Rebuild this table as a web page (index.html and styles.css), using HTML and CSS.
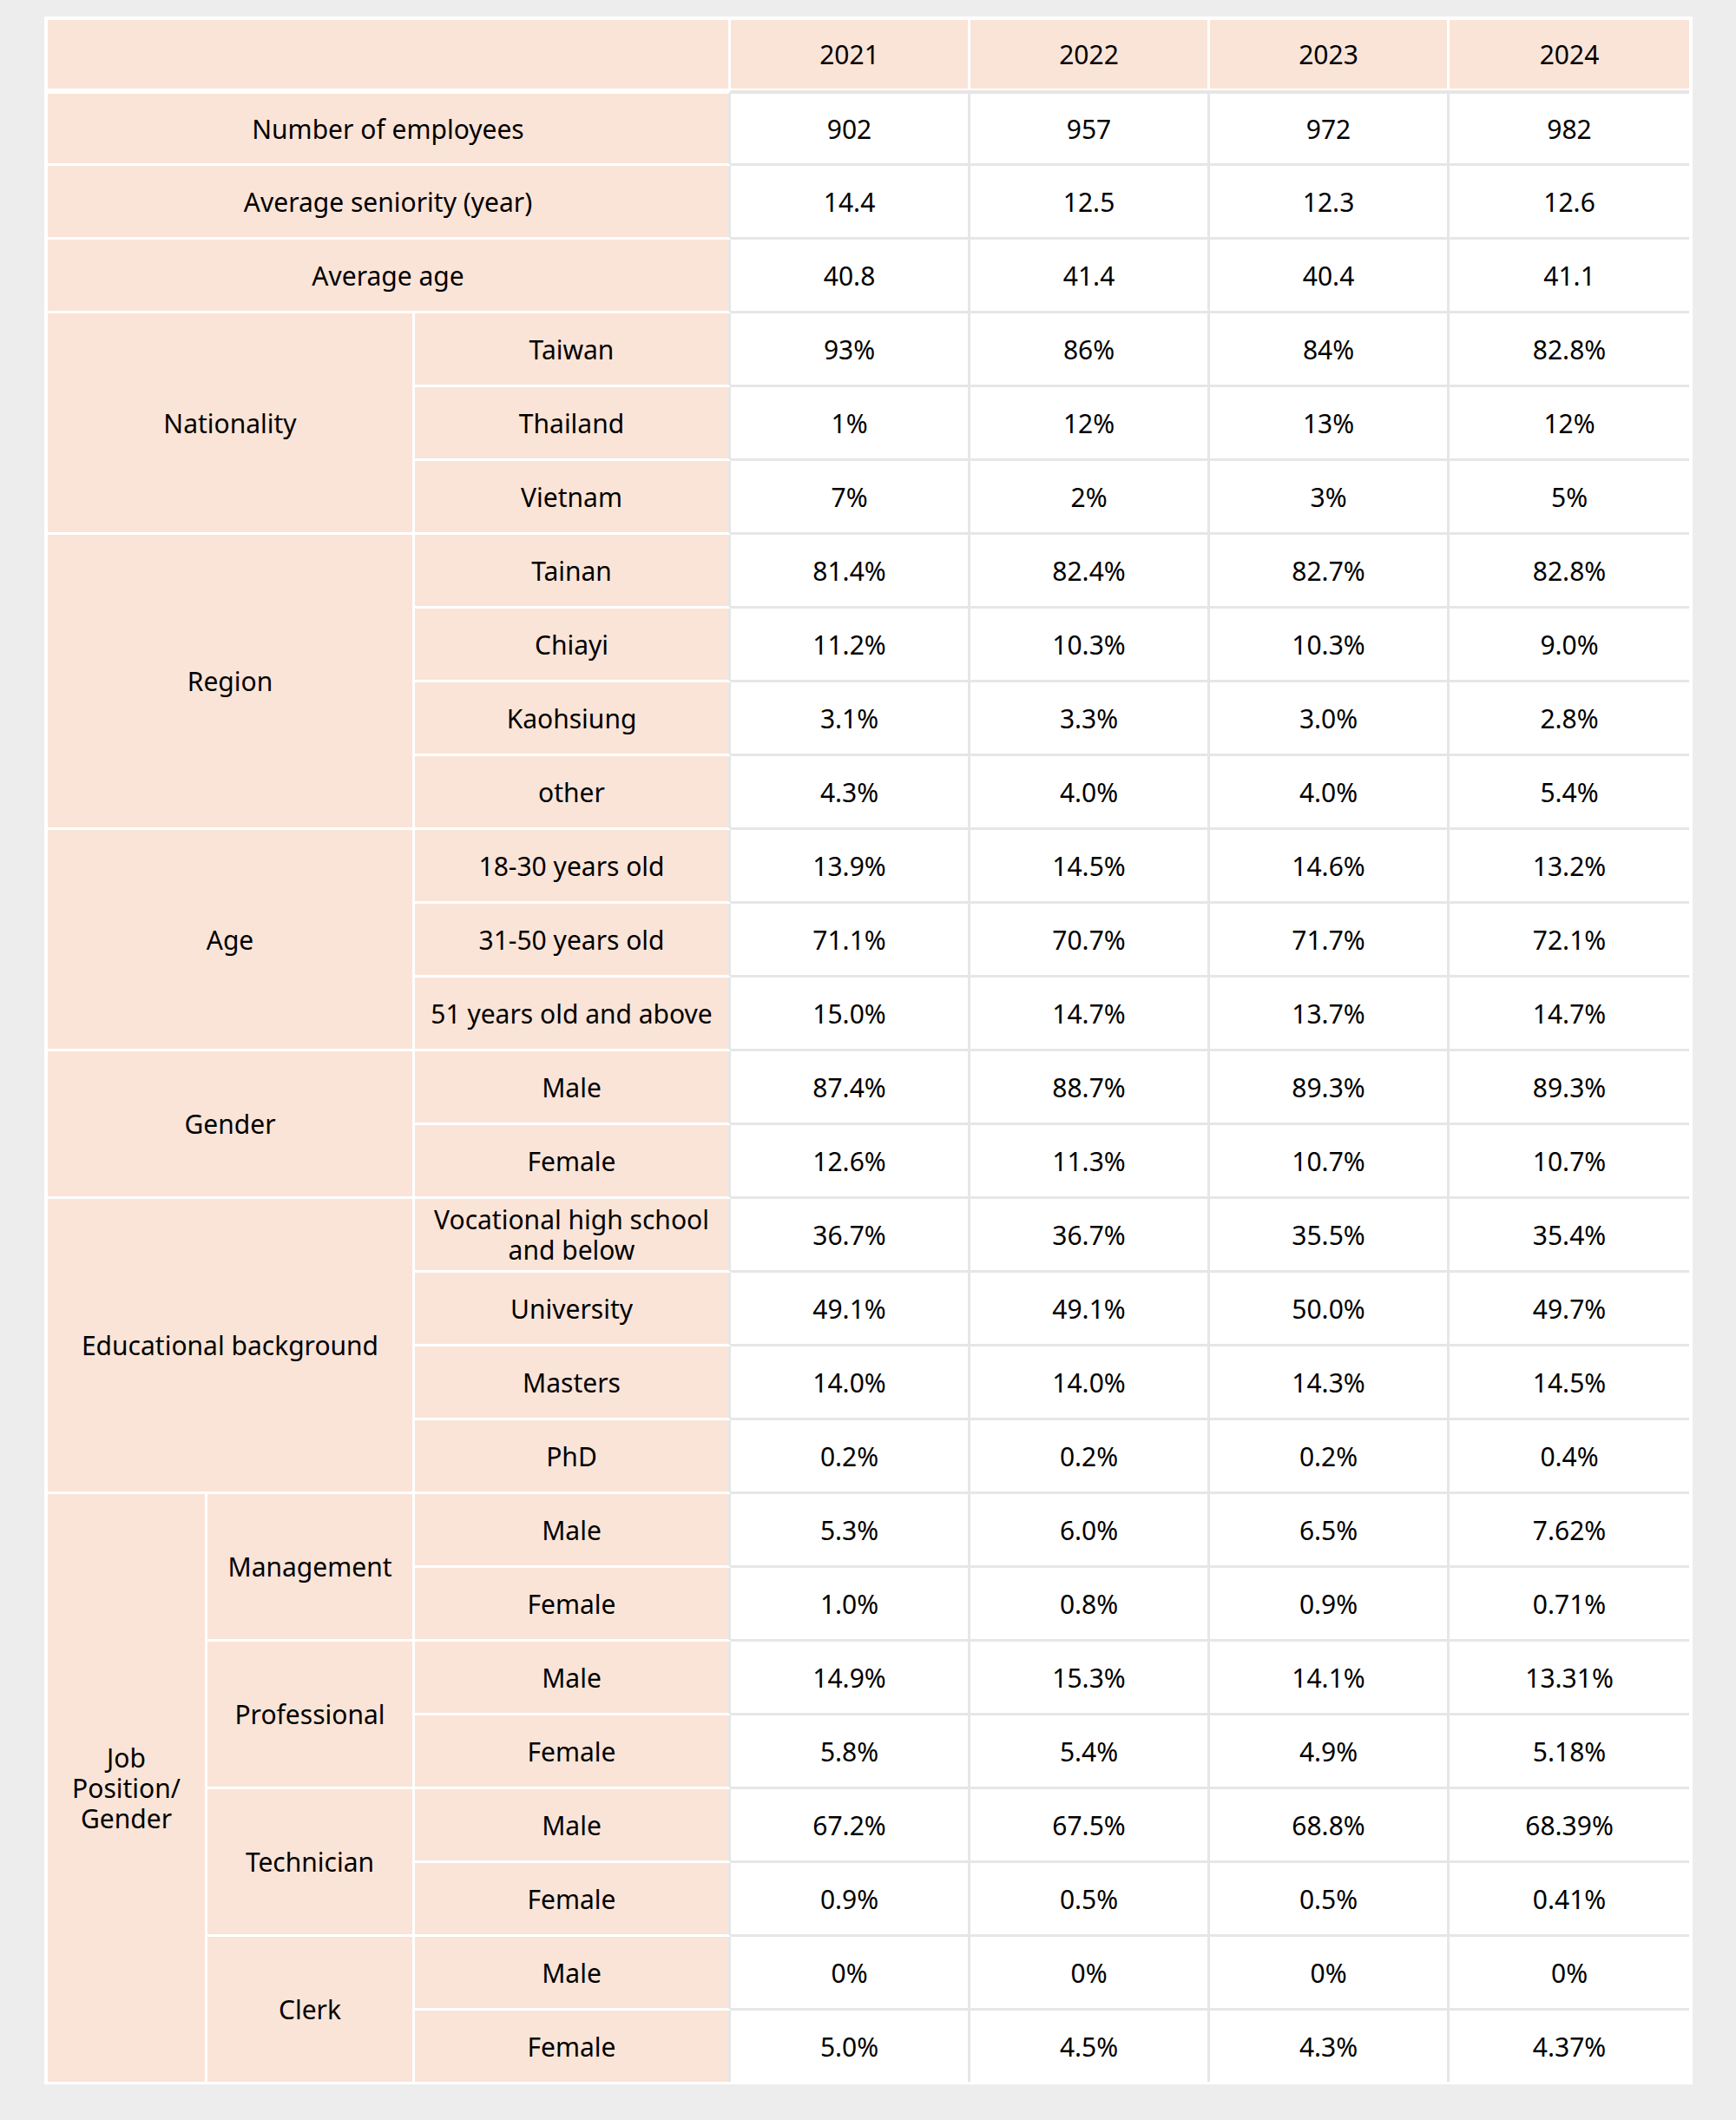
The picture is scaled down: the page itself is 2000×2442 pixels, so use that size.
FILE: index.html
```html
<!DOCTYPE html>
<html lang="en">
<head>
<meta charset="utf-8">
<title>Employee structure</title>
<link rel="stylesheet" href="styles.css">
</head>
<body>
<div class="card">
<table class="stats">
<colgroup>
<col class="w1"><col class="w2"><col class="w3"><col class="wy"><col class="wy"><col class="wy"><col class="wy">
</colgroup>
<thead>
<tr class="head">
<th class="lab" colspan="3"></th><th class="yr">2021</th><th class="yr">2022</th><th class="yr">2023</th><th class="yr end">2024</th>
</tr>
</thead>
<tbody>
<tr class="first"><th class="lab edge" colspan="3">Number of employees</th><td>902</td><td>957</td><td>972</td><td class="end">982</td></tr>
<tr><th class="lab edge" colspan="3">Average seniority (year)</th><td>14.4</td><td>12.5</td><td>12.3</td><td class="end">12.6</td></tr>
<tr><th class="lab edge" colspan="3">Average age</th><td>40.8</td><td>41.4</td><td>40.4</td><td class="end">41.1</td></tr>

<tr><th class="lab" colspan="2" rowspan="3">Nationality</th><th class="lab edge">Taiwan</th><td>93%</td><td>86%</td><td>84%</td><td class="end">82.8%</td></tr>
<tr><th class="lab edge">Thailand</th><td>1%</td><td>12%</td><td>13%</td><td class="end">12%</td></tr>
<tr><th class="lab edge">Vietnam</th><td>7%</td><td>2%</td><td>3%</td><td class="end">5%</td></tr>

<tr><th class="lab" colspan="2" rowspan="4">Region</th><th class="lab edge">Tainan</th><td>81.4%</td><td>82.4%</td><td>82.7%</td><td class="end">82.8%</td></tr>
<tr><th class="lab edge">Chiayi</th><td>11.2%</td><td>10.3%</td><td>10.3%</td><td class="end">9.0%</td></tr>
<tr><th class="lab edge">Kaohsiung</th><td>3.1%</td><td>3.3%</td><td>3.0%</td><td class="end">2.8%</td></tr>
<tr><th class="lab edge">other</th><td>4.3%</td><td>4.0%</td><td>4.0%</td><td class="end">5.4%</td></tr>

<tr><th class="lab" colspan="2" rowspan="3">Age</th><th class="lab edge">18-30 years old</th><td>13.9%</td><td>14.5%</td><td>14.6%</td><td class="end">13.2%</td></tr>
<tr><th class="lab edge">31-50 years old</th><td>71.1%</td><td>70.7%</td><td>71.7%</td><td class="end">72.1%</td></tr>
<tr><th class="lab edge">51 years old and above</th><td>15.0%</td><td>14.7%</td><td>13.7%</td><td class="end">14.7%</td></tr>

<tr><th class="lab" colspan="2" rowspan="2">Gender</th><th class="lab edge">Male</th><td>87.4%</td><td>88.7%</td><td>89.3%</td><td class="end">89.3%</td></tr>
<tr><th class="lab edge">Female</th><td>12.6%</td><td>11.3%</td><td>10.7%</td><td class="end">10.7%</td></tr>

<tr><th class="lab" colspan="2" rowspan="4">Educational background</th><th class="lab edge">Vocational high school and below</th><td>36.7%</td><td>36.7%</td><td>35.5%</td><td class="end">35.4%</td></tr>
<tr><th class="lab edge">University</th><td>49.1%</td><td>49.1%</td><td>50.0%</td><td class="end">49.7%</td></tr>
<tr><th class="lab edge">Masters</th><td>14.0%</td><td>14.0%</td><td>14.3%</td><td class="end">14.5%</td></tr>
<tr><th class="lab edge">PhD</th><td>0.2%</td><td>0.2%</td><td>0.2%</td><td class="end">0.4%</td></tr>

<tr><th class="lab bottom" rowspan="8">Job Position/ Gender</th><th class="lab" rowspan="2">Management</th><th class="lab edge">Male</th><td>5.3%</td><td>6.0%</td><td>6.5%</td><td class="end">7.62%</td></tr>
<tr><th class="lab edge">Female</th><td>1.0%</td><td>0.8%</td><td>0.9%</td><td class="end">0.71%</td></tr>
<tr><th class="lab" rowspan="2">Professional</th><th class="lab edge">Male</th><td>14.9%</td><td>15.3%</td><td>14.1%</td><td class="end">13.31%</td></tr>
<tr><th class="lab edge">Female</th><td>5.8%</td><td>5.4%</td><td>4.9%</td><td class="end">5.18%</td></tr>
<tr><th class="lab" rowspan="2">Technician</th><th class="lab edge">Male</th><td>67.2%</td><td>67.5%</td><td>68.8%</td><td class="end">68.39%</td></tr>
<tr><th class="lab edge">Female</th><td>0.9%</td><td>0.5%</td><td>0.5%</td><td class="end">0.41%</td></tr>
<tr><th class="lab bottom" rowspan="2">Clerk</th><th class="lab edge">Male</th><td>0%</td><td>0%</td><td>0%</td><td class="end">0%</td></tr>
<tr class="last"><th class="lab edge bottom">Female</th><td class="bottom">5.0%</td><td class="bottom">4.5%</td><td class="bottom">4.3%</td><td class="end bottom">4.37%</td></tr>
</tbody>
</table>
</div>
</body>
</html>
```

FILE: styles.css
```css
html, body {
  margin: 0;
  background: #ededed;
}
body {
  padding: 19px 50px 40px 51px;
  font-family: "Noto Sans", "Open Sans", "Liberation Sans", sans-serif;
  color: #000;
}
.card {
  background: #ffffff;
  padding: 4px 5px 3px 4px;
}
.stats {
  width: 1890px;
  table-layout: fixed;
  border-collapse: separate;
  border-spacing: 0;
  font-size: 30px;
  line-height: 35px;
}
.w1 { width: 184px; }
.w2 { width: 239px; }
.w3 { width: 364px; }
.wy { width: 276px; }

.stats th,
.stats td {
  padding: 0 10px;
  text-align: center;
  vertical-align: middle;
  font-weight: 400;
  box-sizing: border-box;
}
.stats tr { height: 85px; }
.stats .head { height: 81px; }
.stats .first { height: 87px; }
.stats .last { height: 82px; }

.lab {
  background: #fae4d7;
  border-right: 3px solid #ffffff;
  border-bottom: 3px solid #ffffff;
}
.lab.edge {
  border-right-color: #e6e6e6;
}
.stats td {
  background: #ffffff;
  border-right: 3px solid #e6e6e6;
  border-bottom: 3px solid #e6e6e6;
}
.head th {
  border-bottom: 2px solid #ffffff;
}
.head .yr {
  background: #fae4d7;
  border-right: 3px solid #ffffff;
}
.head th.end { border-right: 0; }
.first th,
.first td {
  border-top: 4px solid #ffffff;
}
.first td {
  border-top-color: #e6e6e6;
}
.stats td.end { border-right: 0; }
.stats .bottom { border-bottom: 0; }
```
